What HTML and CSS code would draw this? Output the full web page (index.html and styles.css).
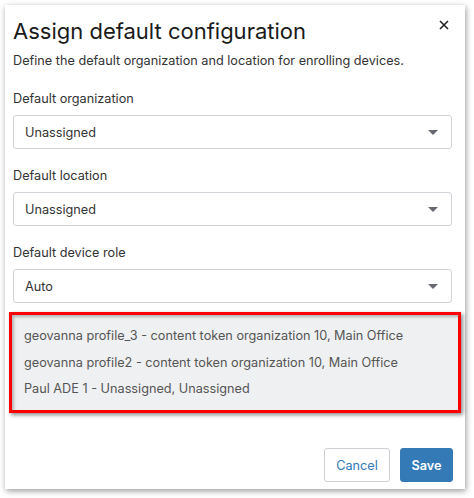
FILE: index.html
```html
<!DOCTYPE html>
<html>
<head>
<meta charset="utf-8">
<link rel="stylesheet" href="styles.css">
</head>
<body>
<div class="dialog">
  <div class="header">
    <h1 class="title">Assign default configuration</h1>
    <button class="close" aria-label="Close">
      <svg width="10" height="10" viewBox="0 0 10 10"><path d="M1 1 L9 9 M9 1 L1 9" stroke="#222" stroke-width="1.6" fill="none"/></svg>
    </button>
  </div>
  <p class="subtitle">Define the default organization and location for enrolling devices.</p>

  <div class="group first">
    <label class="label">Default organization</label>
    <div class="select"><span>Unassigned</span><span class="caret"></span></div>
  </div>
  <div class="group">
    <label class="label">Default location</label>
    <div class="select"><span>Unassigned</span><span class="caret"></span></div>
  </div>
  <div class="group">
    <label class="label">Default device role</label>
    <div class="select"><span>Auto</span><span class="caret"></span></div>
  </div>

  <div class="highlight">
    <div class="list">
      <div class="item">geovanna profile_3 - content token organization 10, Main Office</div>
      <div class="item">geovanna profile2 - content token organization 10, Main Office</div>
      <div class="item">Paul ADE 1 - Unassigned, Unassigned</div>
    </div>
  </div>

  <div class="footer">
    <button class="btn btn-default">Cancel</button>
    <button class="btn btn-primary">Save</button>
  </div>
</div>
</body>
</html>
```
FILE: styles.css
```css
html, body {
  margin: 0;
  padding: 0;
  background: #ffffff;
}
body {
  font-family: Inter, "Noto Sans", sans-serif;
  color: #222;
  width: 474px;
  height: 498px;
  overflow: hidden;
}
.dialog {
  margin: 5px 0 0 5px;
  width: 460px;
  height: 484px;
  box-sizing: border-box;
  padding: 0 13px 7px 8px;
  background: #fff;
  box-shadow: 1px 2px 6px rgba(0,0,0,0.4);
  display: flex;
  flex-direction: column;
}
.header {
  display: flex;
  justify-content: space-between;
  align-items: flex-start;
  padding-top: 11px;
}
.title {
  margin: 0;
  font-size: 22px;
  font-weight: 400;
  line-height: 30px;
  color: #1a1a1a;
}
.close {
  border: 0;
  background: none;
  padding: 0;
  margin: 2px 1px 0 0;
  width: 14px;
  height: 14px;
  display: flex;
  align-items: center;
  justify-content: center;
}
.subtitle {
  margin: 5px 0 0;
  font-size: 12.7px;
  line-height: 20px;
  color: #333;
}
.group {
  display: flex;
  flex-direction: column;
  margin-top: 17px;
}
.group.first { margin-top: 18px; }
.label {
  font-size: 12.7px;
  line-height: 20px;
  color: #333;
  margin-bottom: 6px;
}
.select {
  height: 34px;
  box-sizing: border-box;
  border: 1px solid #d0d3d8;
  border-radius: 3px;
  display: flex;
  align-items: center;
  justify-content: space-between;
  padding: 0 13px 0 11px;
  font-size: 12.7px;
  color: #333;
}
.caret {
  width: 0;
  height: 0;
  border-left: 5px solid transparent;
  border-right: 5px solid transparent;
  border-top: 5px solid #666a70;
}
.highlight {
  margin: 9px -9px 0 -4px;
  border: 3px solid #ff0000;
  box-shadow: 2px 2px 4px rgba(0,0,0,0.45);
}
.list {
  background: #eff0f2;
  box-shadow: inset 2px 2px 3px rgba(0,0,0,0.25);
  padding: 8px 0 7.5px 12px;
}
.item {
  font-size: 12.7px;
  line-height: 26.5px;
  color: #555;
}
.footer {
  margin-top: auto;
  margin-right: -1px;
  display: flex;
  justify-content: flex-end;
  gap: 10px;
}
.btn {
  height: 34px;
  box-sizing: border-box;
  font-family: Inter, "Noto Sans", sans-serif;
  font-size: 12.7px;
  border-radius: 3px;
}
.btn-default {
  width: 66px;
  background: #fff;
  border: 1px solid #ccd0d5;
  color: #337ab7;
}
.btn-primary {
  width: 53px;
  background: #337ab7;
  border: 1px solid #337ab7;
  color: #fff;
  font-weight: 600;
}
```
